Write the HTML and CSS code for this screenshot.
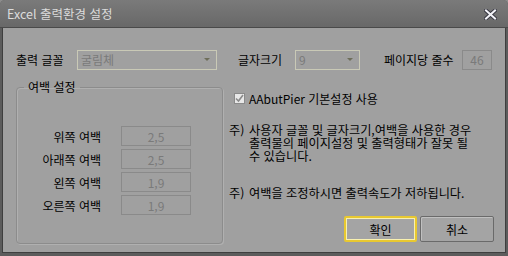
FILE: index.html
```html
<!DOCTYPE html>
<html lang="ko">
<head>
  <meta charset="UTF-8">
  <title>Excel 출력환경 설정</title>
  <link rel="stylesheet" href="styles.css">
</head>
<body>
  <div class="window">
    <div class="titlebar">
      <span class="title">Excel 출력환경 설정</span>
      <span class="close">
        <svg width="13" height="11" viewBox="0 0 13 11"><path d="M2 1.5 L11 9.5 M11 1.5 L2 9.5" stroke="#3c3c46" stroke-width="4" stroke-linecap="square"/><path d="M2 1.5 L11 9.5 M11 1.5 L2 9.5" stroke="#f2f2f8" stroke-width="2" stroke-linecap="square"/></svg>
      </span>
    </div>
    <div class="body">
      <div class="toprow">
        <span class="lbl font-lbl">출력 글꼴</span>
        <div class="combo font-combo"><span>굴림체</span><i class="arrow"></i></div>
        <span class="lbl size-lbl">글자크기</span>
        <div class="combo size-combo"><span>9</span><i class="arrow"></i></div>
        <span class="lbl lines-lbl">페이지당 줄수</span>
        <div class="field lines-field">46</div>
      </div>
      <div class="main">
        <fieldset class="group">
          <legend>여백 설정</legend>
          <div class="mrow"><span class="mlbl">위쪽 여백</span><div class="field mfield">2,5</div></div>
          <div class="mrow"><span class="mlbl">아래쪽 여백</span><div class="field mfield">2,5</div></div>
          <div class="mrow"><span class="mlbl">왼쪽 여백</span><div class="field mfield">1,9</div></div>
          <div class="mrow"><span class="mlbl">오른쪽 여백</span><div class="field mfield">1,9</div></div>
        </fieldset>
        <div class="side">
          <label class="check">
            <span class="box">
              <svg width="9" height="9" viewBox="0 0 9 9"><path d="M1 4.5 L3.5 7 L8 1" fill="none" stroke="#8a8a8a" stroke-width="1.6"/></svg>
            </span>
            AAbutPier 기본설정 사용
          </label>
          <div class="note">
            <span class="mark">주)</span>
            <span class="ntext">사용자 글꼴 및 글자크기,여백을 사용한 경우<br>출력물의 페이지설정 및 출력형태가 잘못 될<br>수 있습니다.</span>
          </div>
          <div class="note note2">
            <span class="mark">주)</span>
            <span class="ntext">여백을 조정하시면 출력속도가 저하됩니다.</span>
          </div>
          <div class="buttons">
            <button class="btn ok">확인</button>
            <button class="btn">취소</button>
          </div>
        </div>
      </div>
    </div>
  </div>
</body>
</html>
```

FILE: styles.css
```css
html, body{
  margin: 0;
  padding: 0;
  background: #8c8c8c;
}
body{
  font-family: "Noto Sans CJK KR", "Liberation Sans", sans-serif;
  font-size: 12px;
  color: #000;
}
.window{
  width: 508px;
  height: 256px;
  display: flex;
  flex-direction: column;
  background: #5c5c5c;
  border-radius: 5px 5px 0 0;
  overflow: hidden;
  box-sizing: border-box;
}
.titlebar{
  height: 28px;
  flex: none;
  display: flex;
  align-items: center;
  padding: 0 11px 0 7px;
  background: linear-gradient(#7a7a7a, #686868);
  border-bottom: 1px solid #4a4a4a;
  box-sizing: border-box;
}
.title{
  color: #dcdcdc;
  font-size: 12.5px;
  line-height: 1;
  margin-top: 2px;
}
.close{
  margin-left: auto;
  display: flex;
  margin-top: 1px;
}
.body{
  flex: 1;
  margin: 0 2px 3px 2px;
  background: #a0a0a0;
  border-left: 1px solid #3f3f3f;
  border-right: 1px solid #3f3f3f;
  border-bottom: 1px solid #3f3f3f;
  padding: 21px 0 0 13px;
  box-sizing: border-box;
}
.toprow{
  display: flex;
  align-items: center;
  height: 21px;
}
.lbl{
  white-space: nowrap;
}
.font-lbl{ width: 61px; }
.size-lbl{ margin-left: 21px; width: 57px; }
.lines-lbl{ margin-left: 24px; width: 78px; }
.combo{
  height: 20px;
  box-sizing: border-box;
  border: 1px solid #c9c9b6;
  display: flex;
  align-items: center;
  padding: 0 6px 0 3px;
  color: #7a7a7a;
}
.combo span{ flex: 1; }
.font-combo{ width: 140px; }
.size-combo{ width: 65px; }
.arrow{
  width: 0;
  height: 0;
  border-left: 3px solid transparent;
  border-right: 3px solid transparent;
  border-top: 3px solid #6e6e5a;
}
.field{
  height: 20px;
  box-sizing: border-box;
  border: 1px solid #8a8a8a;
  color: #7a7a7a;
  display: flex;
  align-items: center;
  justify-content: center;
}
.lines-field{ width: 30px; }
.main{
  display: flex;
  margin-top: 10px;
}
.group{
  width: 207px;
  height: 164px;
  box-sizing: border-box;
  margin: 0;
  padding: 32px 0 0 0;
  border: 1px solid #8c8c8c;
  border-radius: 4px;
  box-shadow: inset 1px 1px 0 #b0b0b0, 1px 1px 0 #b0b0b0;
}
.group legend{
  margin-left: 7px;
  padding: 0 4px;
  line-height: 14px;
}
.mrow{
  display: flex;
  align-items: center;
  height: 20px;
  margin-bottom: 3px;
}
.mlbl{
  width: 84px;
  text-align: right;
  white-space: nowrap;
}
.mfield{
  width: 70px;
  margin-left: 20px;
}
.side{
  margin-left: 6px;
  flex: 1;
  padding-top: 11px;
}
.check{
  display: flex;
  align-items: center;
  margin-left: 5px;
  height: 14px;
}
.box{
  width: 11px;
  height: 11px;
  box-sizing: border-box;
  border: 1px solid #8a8a8a;
  background: #e8e8e8;
  display: flex;
  align-items: center;
  justify-content: center;
  margin-right: 4px;
}
.note{
  display: flex;
  margin-top: 19px;
  line-height: 13px;
  font-size: 12.2px;
}
.note2{ margin-top: 24px; }
.mark{ width: 20px; flex: none; }
.buttons{
  display: flex;
  justify-content: flex-end;
  gap: 3px;
  margin-top: 16px;
  padding-right: 11px;
}
.btn{
  width: 74px;
  height: 26px;
  font: inherit;
  color: #000;
  background: #a4a4a4;
  border: 1px solid #6a6a6a;
  border-radius: 2px;
  box-shadow: inset 1px 1px 0 #c0c0c0;
  padding: 0;
}
.btn.ok{
  width: 73px;
  border: 2px solid #e8c830;
  box-shadow: inset 0 0 0 1px #f8f0b0;
}
```
